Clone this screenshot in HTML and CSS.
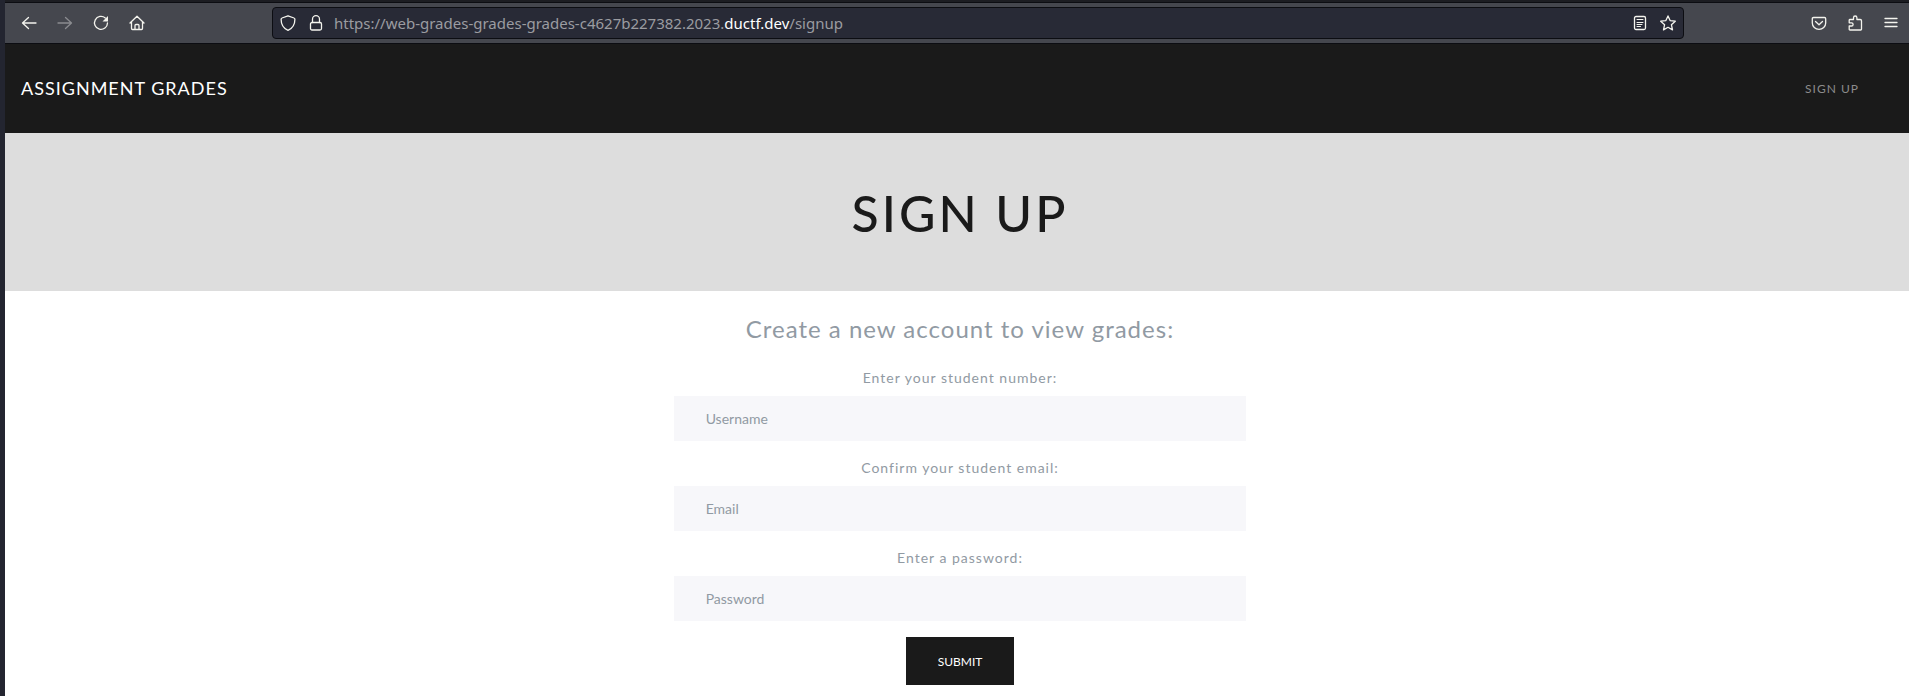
FILE: index.html
```html
<!DOCTYPE html>
<html lang="en">
<head>
<meta charset="utf-8">
<title>Sign Up</title>
<link rel="stylesheet" href="styles.css">
</head>
<body>
<div class="window">
  <div class="tabstrip"></div>
  <div class="toolbar">
    <div class="tools tools-start">
      <button class="tool" aria-label="Back"><svg viewBox="0 0 16 16"><path d="M15 8H1.500M7.500 2.500 1.500 8l6 5.500"/></svg></button>
      <button class="tool tool-off" aria-label="Forward" disabled><svg viewBox="0 0 16 16"><path d="M1 8h13.500M8.500 2.500l6 5.500-6 5.500"/></svg></button>
      <button class="tool" aria-label="Reload"><svg viewBox="0 0 16 16"><path d="M12.300 3A6.500 6.500 0 1 0 14.500 8"/><path class="solid" d="M15 1v5.500H9.500z"/></svg></button>
      <button class="tool" aria-label="Home"><svg viewBox="0 0 16 16"><path d="M1 8 8 1.300 15 8M2.500 7v6.500q0 1 1 1h9q1 0 1-1V7M6 14.500V10.500q0-1 1-1h2q1 0 1 1v4"/></svg></button>
    </div>
    <div class="urlbar">
      <div class="url-icons">
        <button class="tool" aria-label="Tracking protection"><svg viewBox="0 0 16 16"><path d="M8 .8 14 3q.9.300.9 1.300C14.900 9.500 12.500 13.500 8 15.300 3.500 13.500 1.100 9.500 1.100 4.300 1.100 3.300 2 3 2 3z"/></svg></button>
        <button class="tool" aria-label="Connection secure"><svg viewBox="0 0 16 16"><rect x="2.500" y="7.500" width="11" height="7.500" rx="1.500"/><path d="M4.500 7.500V4.200a3.500 3.500 0 0 1 7 0v3.300"/></svg></button>
      </div>
      <a class="address" href="#">https://web-grades-grades-grades-c4627b227382.2023.<span class="domain">ductf.dev</span>/signup</a>
      <div class="url-icons">
        <button class="tool" aria-label="Reader view"><svg viewBox="0 0 16 16"><rect x="2.500" y="1.500" width="11" height="13" rx="1.500"/><path class="thin" d="M5 4.500h6M5 7.500h6M5 9.500h5M5 11.500h3.500"/></svg></button>
        <button class="tool" aria-label="Bookmark"><svg viewBox="0 0 16 16"><path d="m8 .9 2.100 4.700 5.200.6-3.900 3.500 1.100 5.200L8 12.300l-4.500 2.600 1.100-5.200L.7 6.200l5.200-.6z"/></svg></button>
      </div>
    </div>
    <div class="tools tools-end">
      <button class="tool" aria-label="Pocket"><svg viewBox="0 0 16 16"><path d="M2.500 2.500h11q1.200 0 1.200 1.200V8A6.700 6.300 0 0 1 1.300 8V3.700q0-1.200 1.200-1.200zM4.500 6.500 8 9.800l3.500-3.300"/></svg></button>
      <button class="tool" aria-label="Extensions"><svg viewBox="0 0 16 16"><path d="M3 15q-.8 0-.8-.8V11H4.500a1.600 1.600 0 0 0 0-3.200H2.200V5.300q0-.8.8-.8h3.500V2.700a1.700 1.700 0 0 1 3.400 0v1.800h3.300q1.300 0 1.300 1.200v8.500q0 .8-.8.8z"/></svg></button>
      <button class="tool" aria-label="Menu"><svg viewBox="0 0 16 16"><path d="M2 3.500h12M2 7.500h12M2 11.500h12"/></svg></button>
    </div>
  </div>
  <div class="page">
    <nav class="navbar">
      <a class="brand" href="#">ASSIGNMENT GRADES</a>
      <a class="nav-link" href="#">SIGN UP</a>
    </nav>
    <header class="hero"><h1 class="hero-title">SIGN UP</h1></header>
    <main class="content">
      <h2 class="lead">Create a new account to view grades:</h2>
      <form class="form">
        <label class="label" for="username">Enter your student number:</label>
        <input class="field" id="username" type="text" placeholder="Username">
        <label class="label" for="email">Confirm your student email:</label>
        <input class="field" id="email" type="email" placeholder="Email">
        <label class="label" for="password">Enter a password:</label>
        <input class="field" id="password" type="password" placeholder="Password">
        <button class="submit" type="button">SUBMIT</button>
      </form>
    </main>
  </div>
</div>
</body>
</html>
```
FILE: styles.css
```css
* { box-sizing: border-box; }
body {
  margin: 0;
  background: #fff;
  font-family: Lato, "Noto Sans", sans-serif;
}
.window {
  min-height: 100vh;
  border-left: 5px solid #232530;
}
.tabstrip {
  height: 3px;
  background: #1c1d22;
  border-bottom: 1px solid #0c0d12;
}
.toolbar {
  display: flex;
  align-items: center;
  height: 41px;
  background: #45474e;
  border-bottom: 1px solid #0c0d12;
}
.tools { display: flex; }
.tools-start { gap: 20px; padding-left: 16px; margin-right: 127px; }
.tools-end { gap: 20px; padding-right: 10px; margin-left: 127px; }
.tool {
  width: 16px;
  height: 16px;
  padding: 0;
  border: 0;
  background: none;
  color: #f4f4ee;
}
.tool-off { color: #8b8c90; }
.tool svg {
  display: block;
  width: 16px;
  height: 16px;
  fill: none;
  stroke: currentColor;
  stroke-width: 1.3;
  stroke-linecap: round;
  stroke-linejoin: round;
}
.tool .solid { fill: currentColor; stroke: none; }
.tool .thin { stroke-width: 1; }
.urlbar {
  flex: 1;
  display: flex;
  align-items: center;
  gap: 10px;
  height: 32px;
  padding: 0 7px;
  background: #282a36;
  border: 1px solid #0c0d12;
  border-radius: 4px;
}
.url-icons { display: flex; gap: 12px; }
.address {
  flex: 1;
  color: #9b9ca1;
  font-family: "Noto Sans", sans-serif;
  font-size: 15px;
  line-height: 20px;
  text-decoration: none;
}
.domain { color: #fff; }
.navbar {
  display: flex;
  align-items: center;
  justify-content: space-between;
  padding: 32px 50px 32px 16px;
  background: #1a1a1a;
}
.brand {
  color: #fff;
  font-size: 18px;
  line-height: 25px;
  letter-spacing: 1px;
  text-decoration: none;
}
.nav-link {
  color: #8c8c8c;
  font-size: 12px;
  line-height: 16px;
  letter-spacing: 1px;
  text-decoration: none;
}
.hero {
  padding: 50px 0 48px 6px;
  background: #ddd;
}
.hero-title {
  margin: 0;
  color: #1a1a1a;
  font-size: 50px;
  font-weight: 500;
  line-height: 60px;
  letter-spacing: 3px;
  text-align: center;
}
.content {
  padding: 20px 0 11px 6px;
  color: #919aa3;
  text-align: center;
}
.lead {
  margin: 0 0 20px;
  font-size: 24px;
  font-weight: 400;
  line-height: 36px;
  letter-spacing: 1px;
}
.form {
  display: flex;
  flex-direction: column;
  align-items: center;
  width: 30vw;
  margin: 0 auto;
}
.label {
  margin-bottom: 8px;
  font-size: 14px;
  line-height: 21px;
  letter-spacing: 1px;
}
.field {
  width: 100%;
  height: 45px;
  margin-bottom: 16px;
  padding: 0 32px;
  border: 0;
  background: #f7f7fa;
  color: #919aa3;
  font-family: inherit;
  font-size: 14px;
}
.field::placeholder { color: #919aa3; }
.submit {
  height: 48px;
  padding: 0 32px;
  border: 0;
  background: #1a1a1a;
  color: #fff;
  font-family: inherit;
  font-size: 12px;
}
```
